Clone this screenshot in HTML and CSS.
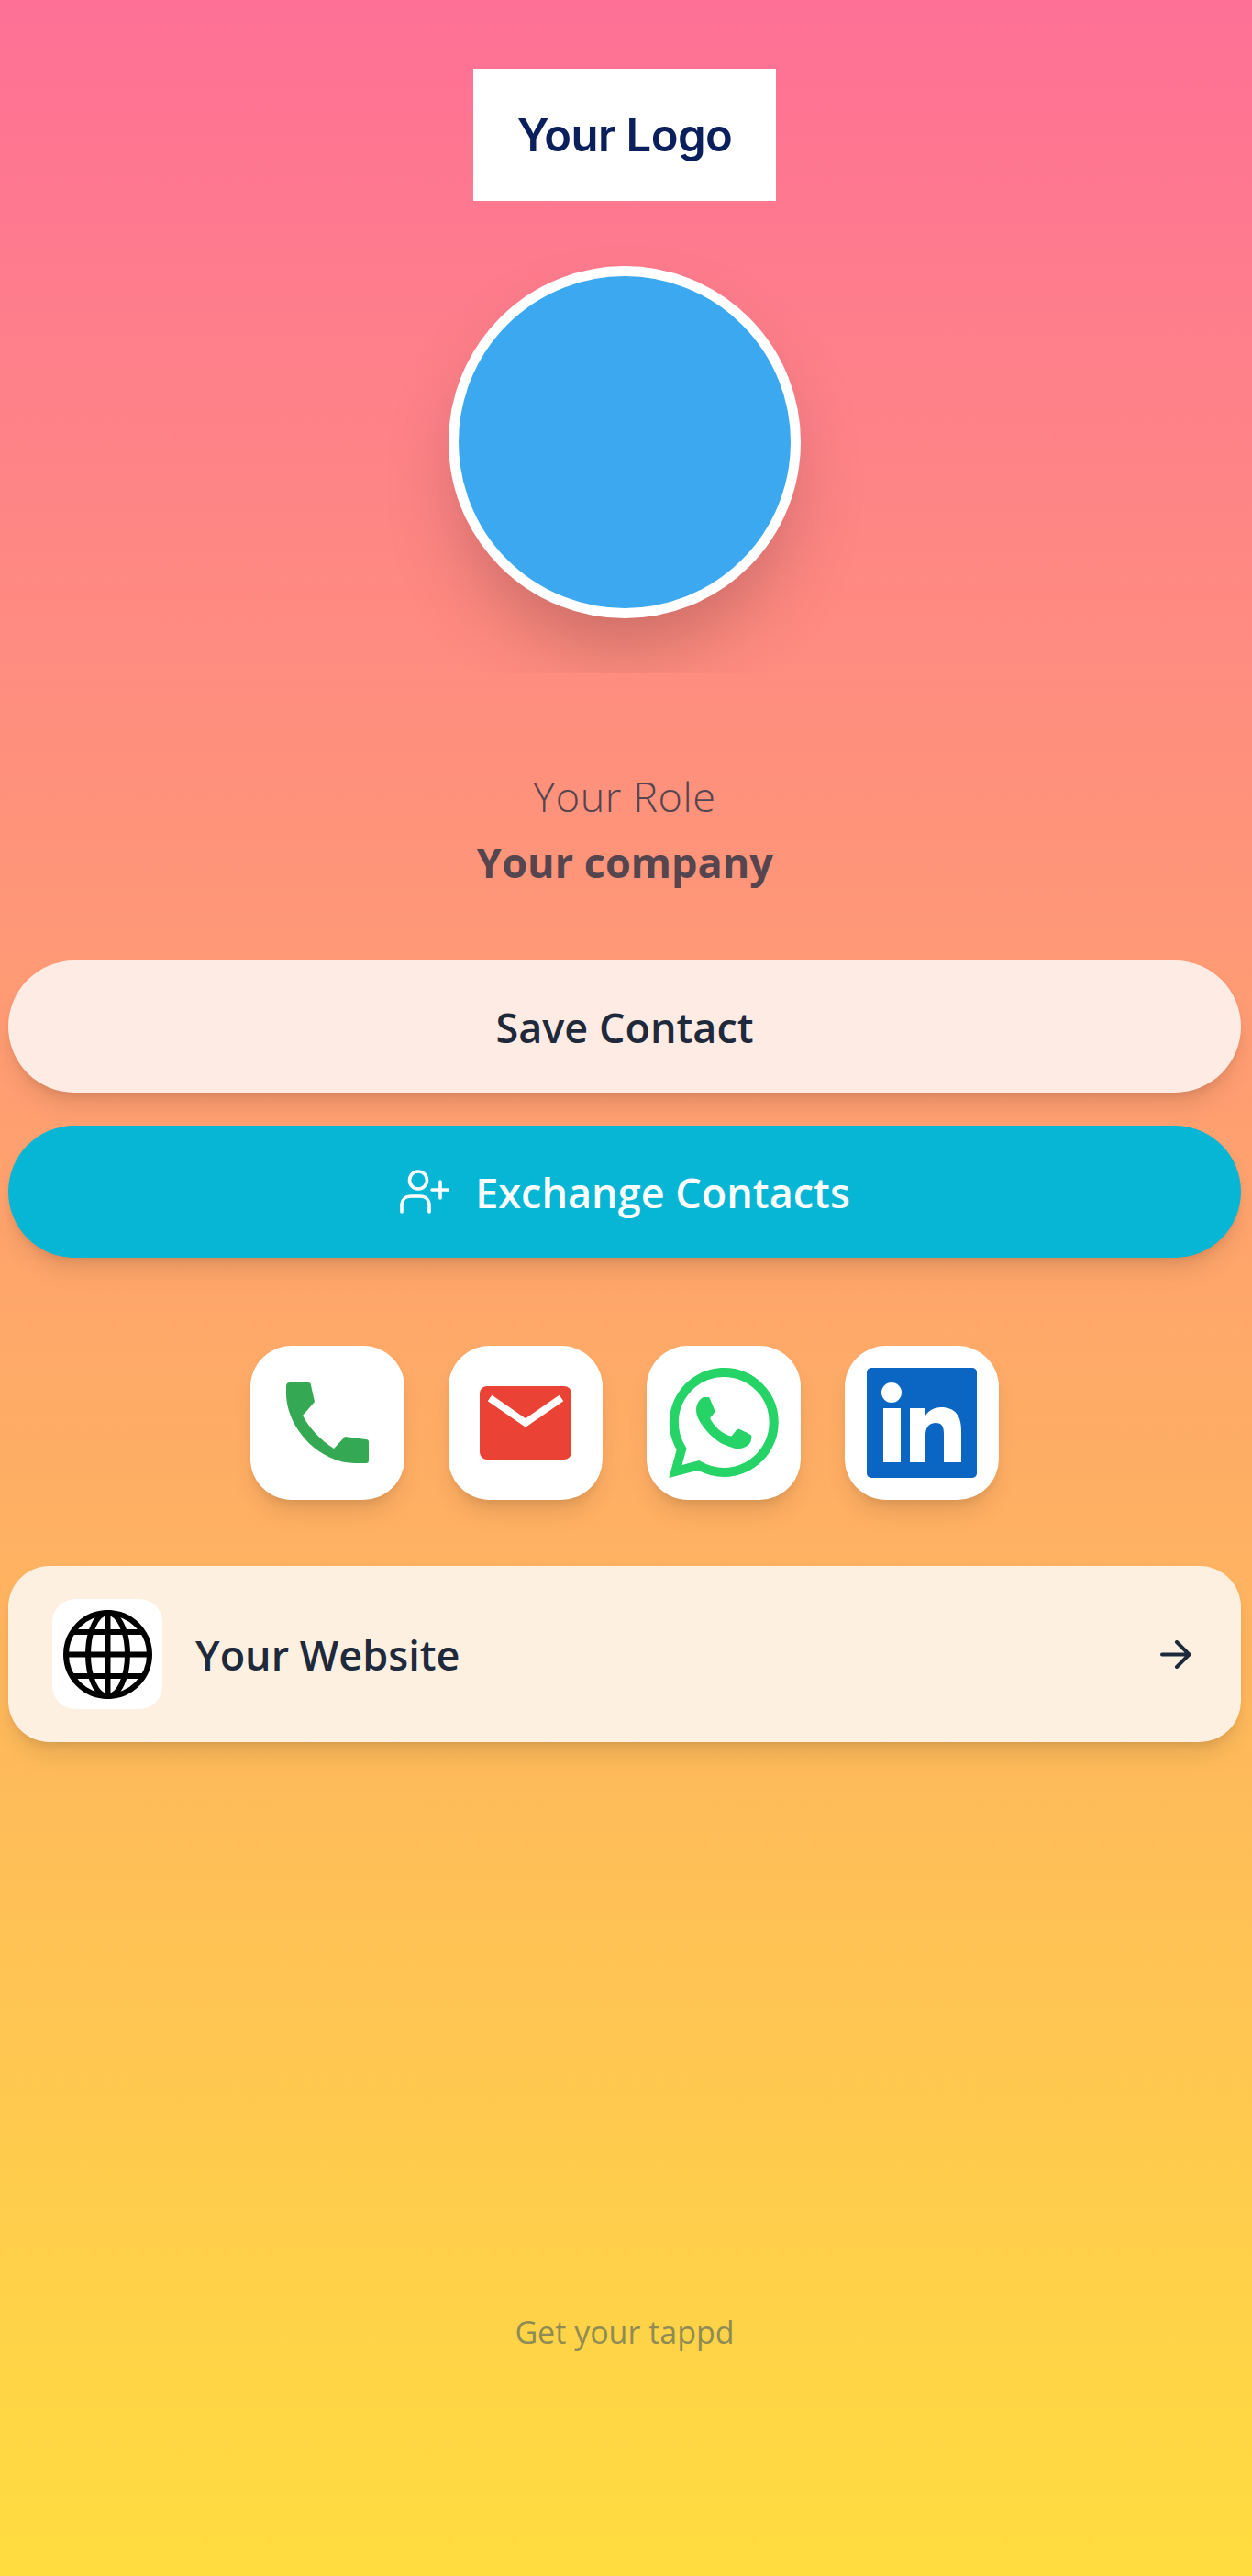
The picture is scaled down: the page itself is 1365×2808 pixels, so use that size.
FILE: index.html
```html
<!DOCTYPE html>
<html lang="en">
<head>
    <meta charset="UTF-8">
    <meta name="viewport" content="width=device-width, initial-scale=1.0">
    <title>Your Role - Your company</title>
    <link rel="stylesheet" href="styles.css">
</head>
<body>
    <div class="page">
        <header class="hero">
            <div class="logo-box"><span class="logo-text">Your Logo</span></div>
            <div class="avatar"></div>
        </header>

        <section class="info">
            <p class="role">Your Role</p>
            <p class="company">Your company</p>
        </section>

        <div class="actions">
            <a class="btn btn-save" href="#">Save Contact</a>
            <a class="btn btn-exchange" href="#">
                <svg class="btn-icon" viewBox="0 0 55 48" fill="none" stroke="currentColor" stroke-width="3.6" stroke-linecap="round">
                    <circle cx="21" cy="11.5" r="9.5"/>
                    <path d="M3 46v-7c0-6 4-10 10-10h10c6 0 10 4 10 10v7"/>
                    <path d="M45 13v18M36 22h18"/>
                </svg>
                Exchange Contacts
            </a>
        </div>

        <div class="socials">
            <a class="social" href="#" aria-label="Phone">
                <svg class="icon-phone" viewBox="0 0 90 90">
                    <path fill="#34a853" d="M4 1H24a3 3 0 0 1 3 3l4 18-13 15c8 15 20 27 34 36l12-13 23 3a3 3 0 0 1 3 3v20a3 3 0 0 1-3 3h-10C36 90 0 50 0 13V5a4 4 0 0 1 4-4z"/>
                </svg>
            </a>
            <a class="social" href="#" aria-label="Email">
                <svg class="icon-mail" viewBox="0 0 100 80">
                    <rect width="100" height="80" rx="8" fill="#ea4335"/>
                    <path d="M11 13l39 27 39-27" fill="none" stroke="#fff" stroke-width="8"/>
                </svg>
            </a>
            <a class="social" href="#" aria-label="WhatsApp">
                <svg class="icon-square" viewBox="0 0 24 24">
                    <path fill="#25d366" d="M17.472 14.382c-.297-.149-1.758-.867-2.03-.967-.273-.099-.471-.148-.67.15-.197.297-.767.966-.94 1.164-.173.199-.347.223-.644.075-.297-.15-1.255-.463-2.39-1.475-.883-.788-1.48-1.761-1.653-2.059-.173-.297-.018-.458.13-.606.134-.133.298-.347.446-.52.149-.174.198-.298.298-.497.099-.198.05-.371-.025-.52-.075-.149-.669-1.612-.916-2.207-.242-.579-.487-.5-.669-.51-.173-.008-.371-.01-.57-.01-.198 0-.52.074-.792.372-.272.297-1.04 1.016-1.04 2.479 0 1.462 1.065 2.875 1.213 3.074.149.198 2.096 3.2 5.077 4.487.709.306 1.262.489 1.694.625.712.227 1.36.195 1.871.118.571-.085 1.758-.719 2.006-1.413.248-.694.248-1.289.173-1.413-.074-.124-.272-.198-.57-.347m-5.421 7.403h-.004a9.87 9.87 0 01-5.031-1.378l-.361-.214-3.741.982.998-3.648-.235-.374a9.86 9.86 0 01-1.51-5.26c.001-5.45 4.436-9.884 9.888-9.884 2.64 0 5.122 1.03 6.988 2.898a9.825 9.825 0 012.893 6.994c-.003 5.45-4.437 9.884-9.885 9.884m8.413-18.297A11.815 11.815 0 0012.05 0C5.495 0 .16 5.335.157 11.892c0 2.096.547 4.142 1.588 5.945L.057 24l6.305-1.654a11.882 11.882 0 005.683 1.448h.005c6.554 0 11.89-5.335 11.893-11.893a11.821 11.821 0 00-3.48-8.413z"/>
                </svg>
            </a>
            <a class="social" href="#" aria-label="LinkedIn">
                <svg class="icon-square" viewBox="0 0 120 120">
                    <rect width="120" height="120" rx="5" fill="#0a66c2"/>
                    <circle cx="27" cy="27" r="11" fill="#fff"/>
                    <path fill="#fff" d="M18 44h19v59H18zM47 44h17v8c3-5 9-9 17-9 15 0 22 9 22 25v35H84V72c0-8-2-12-9-12s-11 5-11 13v30H47z"/>
                </svg>
            </a>
        </div>

        <a class="link-card" href="#">
            <span class="link-icon">
                <svg class="icon-globe" viewBox="0 0 97 97" fill="none" stroke="#000" stroke-width="6">
                    <circle cx="48.5" cy="48.5" r="45.5"/>
                    <ellipse cx="48.5" cy="48.5" rx="21.5" ry="45.5"/>
                    <path d="M48.5 3v91M3 48.5h91M11 24h75M11 72h75"/>
                </svg>
            </span>
            <span class="link-label">Your Website</span>
            <svg class="link-arrow" viewBox="0 0 33 31" fill="none" stroke="currentColor" stroke-width="4" stroke-linecap="round" stroke-linejoin="round">
                <path d="M2 15.5h29M18 2l13.5 13.5L18 29"/>
            </svg>
        </a>

        <footer class="footer">Get your tappd</footer>
    </div>
</body>
</html>
```

FILE: styles.css
```css
* {
    box-sizing: border-box;
}
body {
    margin: 0;
    font-family: 'Open Sans', 'Noto Sans', sans-serif;
    color: #1e293b;
    background: linear-gradient(to bottom, #fe7096, #ffdd3f);
}
a {
    text-decoration: none;
    color: inherit;
}
p {
    margin: 0;
}
.page {
    display: flex;
    flex-direction: column;
    height: 2808px;
    padding: 0 12px 0 9px;
    overflow: hidden;
}

/* Logo and picture, the shadow is cut off at the bottom of this block */
.hero {
    display: flex;
    flex-direction: column;
    align-items: center;
    height: 734px;
    padding-top: 75px;
    overflow: hidden;
}
.logo-box {
    display: flex;
    justify-content: center;
    align-items: center;
    width: 330px;
    height: 144px;
    background: #fff;
}
.logo-text {
    font-family: 'Inter', sans-serif;
    font-size: 49px;
    font-weight: 600;
    letter-spacing: -0.6px;
    color: #0a1f5c;
}
.avatar {
    width: 384px;
    height: 384px;
    margin-top: 71px;
    flex-shrink: 0;
    border-radius: 50%;
    border: 11px solid #fff;
    background: #3ba8f0;
    box-shadow: 0 45px 90px -22px rgba(0, 0, 0, 0.25);
}

.info {
    margin-top: 98px;
    height: 215px;
    text-align: center;
    color: #55454f;
}
.role {
    font-size: 45px;
    font-weight: 300;
    line-height: 72px;
    letter-spacing: 0.6px;
}
.company {
    font-size: 45px;
    font-weight: 700;
    line-height: 72px;
}

.actions {
    display: flex;
    flex-direction: column;
    gap: 36px;
}
.btn {
    display: flex;
    justify-content: center;
    align-items: center;
    height: 144px;
    border-radius: 72px;
    font-size: 45px;
    font-weight: 600;
    box-shadow: 0 18px 27px -5px rgba(0, 0, 0, 0.1), 0 7px 11px -5px rgba(0, 0, 0, 0.1);
}
.btn-save {
    background: #feece4;
}
.btn-exchange {
    gap: 28px;
    background: #06b6d4;
    color: #fff;
}
.btn-icon {
    width: 55px;
    height: 48px;
}

.socials {
    display: flex;
    justify-content: center;
    gap: 48px;
    margin-top: 96px;
}
.social {
    display: flex;
    justify-content: center;
    align-items: center;
    width: 168px;
    height: 168px;
    border-radius: 45px;
    background: #fff;
    box-shadow: 0 18px 27px -5px rgba(0, 0, 0, 0.1), 0 7px 11px -5px rgba(0, 0, 0, 0.1);
}
.icon-phone {
    width: 90px;
    height: 90px;
}
.icon-mail {
    width: 100px;
    height: 80px;
}
.icon-square {
    width: 120px;
    height: 120px;
}

.link-card {
    display: flex;
    align-items: center;
    height: 192px;
    margin-top: 72px;
    padding: 0 55px 0 48px;
    border-radius: 45px;
    background: #fdf0e0;
    box-shadow: 0 18px 27px -5px rgba(0, 0, 0, 0.1), 0 7px 11px -5px rgba(0, 0, 0, 0.1);
}
.link-icon {
    display: flex;
    justify-content: center;
    align-items: center;
    width: 120px;
    height: 120px;
    border-radius: 25px;
    background: #fff;
}
.icon-globe {
    width: 97px;
    height: 97px;
}
.link-label {
    flex: 1;
    margin-left: 36px;
    font-size: 45px;
    font-weight: 600;
}
.link-arrow {
    width: 33px;
    height: 31px;
}

.footer {
    margin-top: auto;
    margin-bottom: 243px;
    text-align: center;
    font-size: 34px;
    color: #8f8b55;
}
```
